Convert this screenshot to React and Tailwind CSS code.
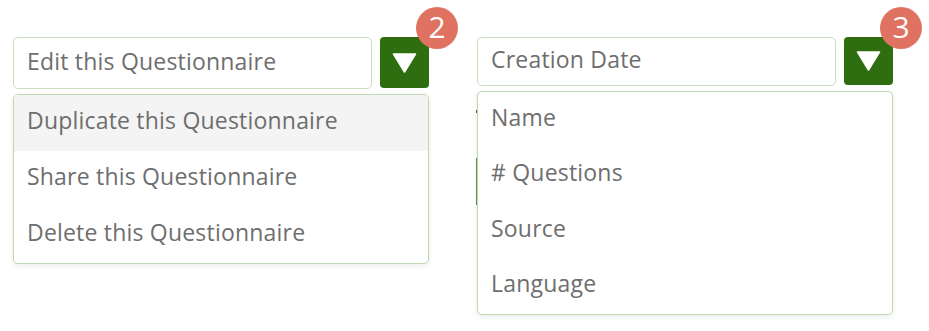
import React from "react";

const font = { fontFamily: "'Open Sans', Lato, sans-serif" };

const Triangle = () => (
  <svg width="25" height="20" viewBox="0 0 25 20">
    <path d="M1.5 1 L23.5 1 L12.5 19 Z" fill="white" stroke="white" strokeWidth="1.5" strokeLinejoin="round" />
  </svg>
);

const Picker = ({ value, badge, items, inputH, itemH, highlight }) => (
  <div className="relative w-[416px]">
    <div className="flex items-start gap-[8px]">
      <div
        className="flex w-[359px] items-center rounded-[5px] border border-[#c9ddbd] bg-white px-[13px] pb-[4px] text-[23px] tracking-[0.2px] text-[#6e6e6e]"
        style={{ height: inputH }}
      >
        {value}
      </div>
      <div className="relative">
        <button
          className="flex w-[49px] items-center justify-center rounded-[4px] bg-[#2e6e10]"
          style={{ height: inputH - 1 }}
        >
          <Triangle />
        </button>
        <span className="absolute -right-[29px] -top-[30px] flex h-[42px] w-[42px] items-center justify-center rounded-full bg-[#e07262] pb-[2px] text-[30px] leading-none text-white">
          {badge}
        </span>
      </div>
    </div>
    <ul className="relative mt-[5px] overflow-hidden rounded-[5px] border border-[#bfd8b0] bg-white shadow-[0_2px_6px_rgba(0,0,0,0.08)]">
      {items.map((item, i) => (
        <li
          key={item}
          className={`flex items-center px-[13px] pb-[6px] text-[23px] tracking-[0.2px] text-[#6e6e6e] ${
            i === 0 && highlight ? "bg-[#f4f4f4]" : ""
          }`}
          style={{ height: itemH }}
        >
          {item}
        </li>
      ))}
    </ul>
  </div>
);

export default function App() {
  return (
    <div className="h-[331px] w-[929px] bg-white" style={font}>
      <div className="flex gap-[48px] pl-[13px] pt-[37px]">
        <Picker
          value="Edit this Questionnaire"
          badge="2"
          inputH={52}
          itemH={56}
          highlight
          items={["Duplicate this Questionnaire", "Share this Questionnaire", "Delete this Questionnaire"]}
        />
        <div className="relative">
          <Picker
            value="Creation Date"
            badge="3"
            inputH={49}
            itemH={55.5}
            items={["Name", "# Questions", "Source", "Language"]}
          />
          <span className="absolute -left-[1px] top-[121px] z-10 h-[47px] w-[1px] bg-[#5f8f4a]" />
          <span className="absolute -left-[1px] top-[73px] z-10 h-[3px] w-[1px] bg-[#555]" />
        </div>
      </div>
    </div>
  );
}
